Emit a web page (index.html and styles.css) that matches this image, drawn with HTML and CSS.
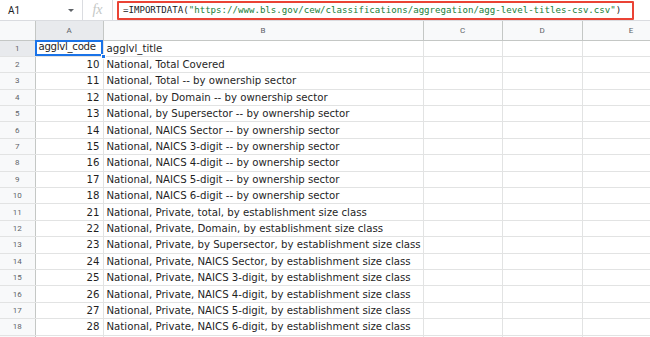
FILE: index.html
```html
<!DOCTYPE html>
<html lang="en">
<head>
  <meta charset="UTF-8" />
  <title>agg-level-titles - Sheet</title>
  <link rel="stylesheet" href="styles.css">
</head>
<body>
  <!-- Barre de formule -->
  <div class="formula-bar">
    <div class="name-box">
      <span class="name-ref">A1</span>
      <span class="name-arrow"></span>
    </div>
    <div class="fx">fx</div>
    <div class="formula-input">
      <span class="fn">=IMPORTDATA(</span><span class="str">"https://www.bls.gov/cew/classifications/aggregation/agg-level-titles-csv.csv"</span><span class="fn">)</span>
    </div>
  </div>

  <!-- Grille -->
  <table class="grid">
    <colgroup>
      <col class="c-row"><col class="c-a"><col class="c-b"><col class="c-c"><col class="c-d"><col class="c-e">
    </colgroup>
    <thead>
      <tr>
        <th class="corner"></th>
        <th class="active">A</th>
        <th>B</th>
        <th>C</th>
        <th>D</th>
        <th>E</th>
      </tr>
    </thead>
    <tbody id="rows">
      <tr>
        <th class="active">1</th>
        <td class="selected">agglvl_code<span class="handle"></span></td>
        <td>agglvl_title</td>
        <td></td><td></td><td></td>
      </tr>
    </tbody>
  </table>

  <script>
    const data = [
      [10, 'National, Total Covered'],
      [11, 'National, Total -- by ownership sector'],
      [12, 'National, by Domain -- by ownership sector'],
      [13, 'National, by Supersector -- by ownership sector'],
      [14, 'National, NAICS Sector -- by ownership sector'],
      [15, 'National, NAICS 3-digit -- by ownership sector'],
      [16, 'National, NAICS 4-digit -- by ownership sector'],
      [17, 'National, NAICS 5-digit -- by ownership sector'],
      [18, 'National, NAICS 6-digit -- by ownership sector'],
      [21, 'National, Private, total, by establishment size class'],
      [22, 'National, Private, Domain, by establishment size class'],
      [23, 'National, Private, by Supersector, by establishment size class'],
      [24, 'National, Private, NAICS Sector, by establishment size class'],
      [25, 'National, Private, NAICS 3-digit, by establishment size class'],
      [26, 'National, Private, NAICS 4-digit, by establishment size class'],
      [27, 'National, Private, NAICS 5-digit, by establishment size class'],
      [28, 'National, Private, NAICS 6-digit, by establishment size class']
    ];

    const tbody = document.getElementById('rows');
    data.forEach((row, i) => {
      const tr = document.createElement('tr');
      tr.innerHTML =
        '<th>' + (i + 2) + '</th>' +
        '<td class="num">' + row[0] + '</td>' +
        '<td>' + row[1] + '</td><td></td><td></td><td></td>';
      tbody.appendChild(tr);
    });

    // ligne suivante, coupée par le bas de l'écran
    const last = document.createElement('tr');
    last.innerHTML = '<th></th><td></td><td></td><td></td><td></td><td></td>';
    tbody.appendChild(last);
  </script>
</body>
</html>
```

FILE: styles.css
```css
* {
  box-sizing: border-box;
  margin: 0;
  padding: 0;
}
body {
  width: 650px;
  height: 337px;
  overflow: hidden;
  background: #fff;
  font-family: "DejaVu Sans", Verdana, sans-serif;
  color: #222;
}

/* Barre de formule */
.formula-bar {
  display: flex;
  align-items: center;
  height: 21px;
  border-bottom: 1px solid #dadce0;
  background: #fff;
}
.name-box {
  display: flex;
  align-items: center;
  justify-content: space-between;
  width: 83px;
  height: 100%;
  padding: 0 8px 0 8px;
  border-right: 1px solid #dadce0;
  font-family: Roboto, "Liberation Sans", sans-serif;
  font-size: 10px;
  color: #202124;
}
.name-arrow {
  width: 0;
  height: 0;
  border-left: 3px solid transparent;
  border-right: 3px solid transparent;
  border-top: 3px solid #5f6368;
  margin-top: 1px;
}
.fx {
  width: 30px;
  height: 100%;
  line-height: 20px;
  text-align: center;
  font-family: "Liberation Serif", serif;
  font-style: italic;
  font-size: 14px;
  color: #c4c7c5;
  border-right: 1px solid #dadce0;
  margin-right: 4px;
}
.formula-input {
  height: 19px;
  width: 517px;
  border: 2px solid #ea4335;
  border-radius: 1px;
  padding: 0 0 0 4px;
  font-family: "DejaVu Sans Mono", "Liberation Mono", monospace;
  font-size: 9.1px;
  line-height: 15px;
  white-space: nowrap;
  overflow: hidden;
}
.fn {
  color: #202124;
}
.str {
  color: #188038;
}

/* Grille */
.grid {
  border-collapse: collapse;
  table-layout: fixed;
  width: 680px;
}
.c-row { width: 35px; }
.c-a { width: 68px; }
.c-b { width: 320px; }
.c-c { width: 79px; }
.c-d { width: 80px; }
.c-e { width: 98px; }

.grid thead th {
  height: 19px;
  background: #f8f9fa;
  border-right: 1px solid #c4c7c5;
  border-bottom: 1px solid #c4c7c5;
  font-family: Roboto, "Liberation Sans", sans-serif;
  font-weight: 400;
  font-size: 8px;
  color: #5f6368;
  text-align: center;
}
.grid thead th.active {
  background: #e8eaed;
}
.grid tbody th {
  height: 16.4px;
  background: #f8f9fa;
  border-right: 1px solid #c4c7c5;
  border-bottom: 1px solid #e2e3e3;
  font-family: Roboto, "Liberation Sans", sans-serif;
  font-weight: 400;
  font-size: 8px;
  color: #5f6368;
  text-align: center;
}
.grid tbody th.active {
  background: #e8eaed;
}
.grid td {
  height: 16.4px;
  border-right: 1px solid #e2e3e3;
  border-bottom: 1px solid #e2e3e3;
  padding: 0 3px;
  font-size: 10.2px;
  white-space: nowrap;
  overflow: visible;
  color: #1f1f1f;
}
.grid td.num {
  text-align: right;
}
.grid td.selected {
  position: relative;
  outline: 2px solid #1a73e8;
  outline-offset: -2px;
  padding: 0 2px 2px 3px;
  letter-spacing: -0.3px;
  line-height: 12px;
}
.handle {
  position: absolute;
  right: -3px;
  bottom: -3px;
  width: 5px;
  height: 5px;
  background: #1a73e8;
  border: 1px solid #fff;
}
```
